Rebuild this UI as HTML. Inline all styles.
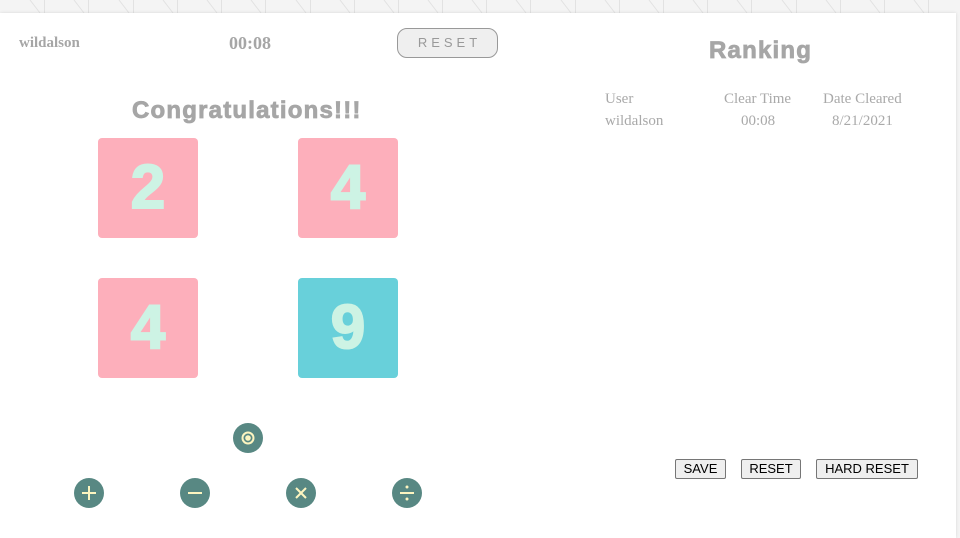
<!DOCTYPE html>
<html><head><meta charset="utf-8"><style>
*{margin:0;padding:0;box-sizing:border-box}
html,body{width:960px;height:538px;overflow:hidden;background:#f4f4f4;position:relative;font-family:"Liberation Serif",serif}
.bg{position:absolute;left:0;top:0}
.panel{position:absolute;left:0;top:13px;width:956px;height:525px;background:#fff;box-shadow:0 0 3px rgba(0,0,0,.12)}
.abs{position:absolute}
.hd{font-weight:bold;color:#a6a6a6}
.reset{left:397px;top:28px;width:101px;height:30px;border:1px solid #999;border-radius:10px;background:#efefef;color:#999;font-family:"Liberation Sans",sans-serif;font-size:13px;letter-spacing:4px;text-align:center;line-height:28px;padding-left:4px}
.big{font-family:"Liberation Sans",sans-serif;font-weight:bold;color:#a6a6a6;-webkit-text-stroke:0.8px #a6a6a6;letter-spacing:1.2px}
.card{position:absolute;width:100px;height:100px;border-radius:4px;background:#fdafbb;color:#cdf3e4;font-family:"Liberation Sans",sans-serif;font-weight:bold;font-size:62px;text-align:center;line-height:100px;-webkit-text-stroke:2px #cdf3e4}
.tb{color:#a9a9a9;font-size:15px}
.btn{position:absolute;top:459px;height:20px;border:1px solid #767676;border-radius:2px;background:#efefef;font-family:"Liberation Sans",sans-serif;font-size:13px;color:#000;text-align:center;line-height:18px}
</style></head><body>
<svg class="bg" width="960" height="14">
<g stroke="#e2e2e2" stroke-width="1">
<line x1="44.5" y1="0" x2="44.5" y2="13"/><line x1="88.5" y1="0" x2="88.5" y2="13"/><line x1="133.5" y1="0" x2="133.5" y2="13"/><line x1="177.5" y1="0" x2="177.5" y2="13"/><line x1="221.5" y1="0" x2="221.5" y2="13"/><line x1="265.5" y1="0" x2="265.5" y2="13"/><line x1="310.5" y1="0" x2="310.5" y2="13"/><line x1="354.5" y1="0" x2="354.5" y2="13"/><line x1="398.5" y1="0" x2="398.5" y2="13"/><line x1="442.5" y1="0" x2="442.5" y2="13"/><line x1="486.5" y1="0" x2="486.5" y2="13"/><line x1="530.5" y1="0" x2="530.5" y2="13"/><line x1="575.5" y1="0" x2="575.5" y2="13"/><line x1="619.5" y1="0" x2="619.5" y2="13"/><line x1="663.5" y1="0" x2="663.5" y2="13"/><line x1="707.5" y1="0" x2="707.5" y2="13"/><line x1="751.5" y1="0" x2="751.5" y2="13"/><line x1="796.5" y1="0" x2="796.5" y2="13"/><line x1="840.5" y1="0" x2="840.5" y2="13"/><line x1="884.5" y1="0" x2="884.5" y2="13"/><line x1="928.5" y1="0" x2="928.5" y2="13"/>
<line x1="30" y1="0" x2="40" y2="13"/><line x1="74" y1="0" x2="84" y2="13"/><line x1="119" y1="0" x2="129" y2="13"/><line x1="163" y1="0" x2="173" y2="13"/><line x1="207" y1="0" x2="217" y2="13"/><line x1="251" y1="0" x2="261" y2="13"/><line x1="296" y1="0" x2="306" y2="13"/><line x1="340" y1="0" x2="350" y2="13"/><line x1="384" y1="0" x2="394" y2="13"/><line x1="428" y1="0" x2="438" y2="13"/><line x1="472" y1="0" x2="482" y2="13"/><line x1="516" y1="0" x2="526" y2="13"/><line x1="561" y1="0" x2="571" y2="13"/><line x1="605" y1="0" x2="615" y2="13"/><line x1="649" y1="0" x2="659" y2="13"/><line x1="693" y1="0" x2="703" y2="13"/><line x1="737" y1="0" x2="747" y2="13"/><line x1="782" y1="0" x2="792" y2="13"/><line x1="826" y1="0" x2="836" y2="13"/><line x1="870" y1="0" x2="880" y2="13"/><line x1="914" y1="0" x2="924" y2="13"/>
</g></svg>
<div class="panel"></div>
<div class="abs hd" style="left:19px;top:35px;font-size:15px">wildalson</div>
<div class="abs hd" style="left:229px;top:33px;font-size:18px">00:08</div>
<div class="abs reset">RESET</div>
<div class="abs big" style="left:709px;top:37px;font-size:24px">Ranking</div>
<div class="abs big" style="left:132px;top:97px;font-size:24px">Congratulations!!!</div>
<div class="card" style="left:98px;top:138px">2</div>
<div class="card" style="left:298px;top:138px">4</div>
<div class="card" style="left:98px;top:278px">4</div>
<div class="card" style="left:298px;top:278px;background:#68d0da">9</div>
<div class="abs tb" style="left:605px;top:91px">User</div>
<div class="abs tb" style="left:724px;top:91px">Clear Time</div>
<div class="abs tb" style="left:823px;top:91px">Date Cleared</div>
<div class="abs tb" style="left:605px;top:113px">wildalson</div>
<div class="abs tb" style="left:741px;top:113px">00:08</div>
<div class="abs tb" style="left:832px;top:113px">8/21/2021</div>
<div class="btn" style="left:675px;width:51px">SAVE</div>
<div class="btn" style="left:741px;width:60px">RESET</div>
<div class="btn" style="left:816px;width:102px">HARD RESET</div>
<svg class="abs" style="left:0;top:0" width="450" height="538">
<g fill="#588883"><circle cx="248" cy="438" r="15"/><circle cx="89" cy="493" r="15"/><circle cx="195" cy="493" r="15"/><circle cx="301" cy="493" r="15"/><circle cx="407" cy="493" r="15"/></g>
<g stroke="#fdf5c0" stroke-width="2" fill="none">
<circle cx="248" cy="438" r="5.5"/>
<line x1="82" y1="493" x2="96" y2="493"/><line x1="89" y1="486" x2="89" y2="500"/>
<line x1="188" y1="493" x2="202" y2="493"/>
<line x1="296" y1="488" x2="306" y2="498"/><line x1="306" y1="488" x2="296" y2="498"/>
<line x1="400" y1="493" x2="414" y2="493"/>
</g>
<g fill="#fdf5c0"><circle cx="248" cy="438" r="2.8"/><circle cx="407" cy="487" r="1.5"/><circle cx="407" cy="499" r="1.5"/></g>
</svg>
</body></html>
